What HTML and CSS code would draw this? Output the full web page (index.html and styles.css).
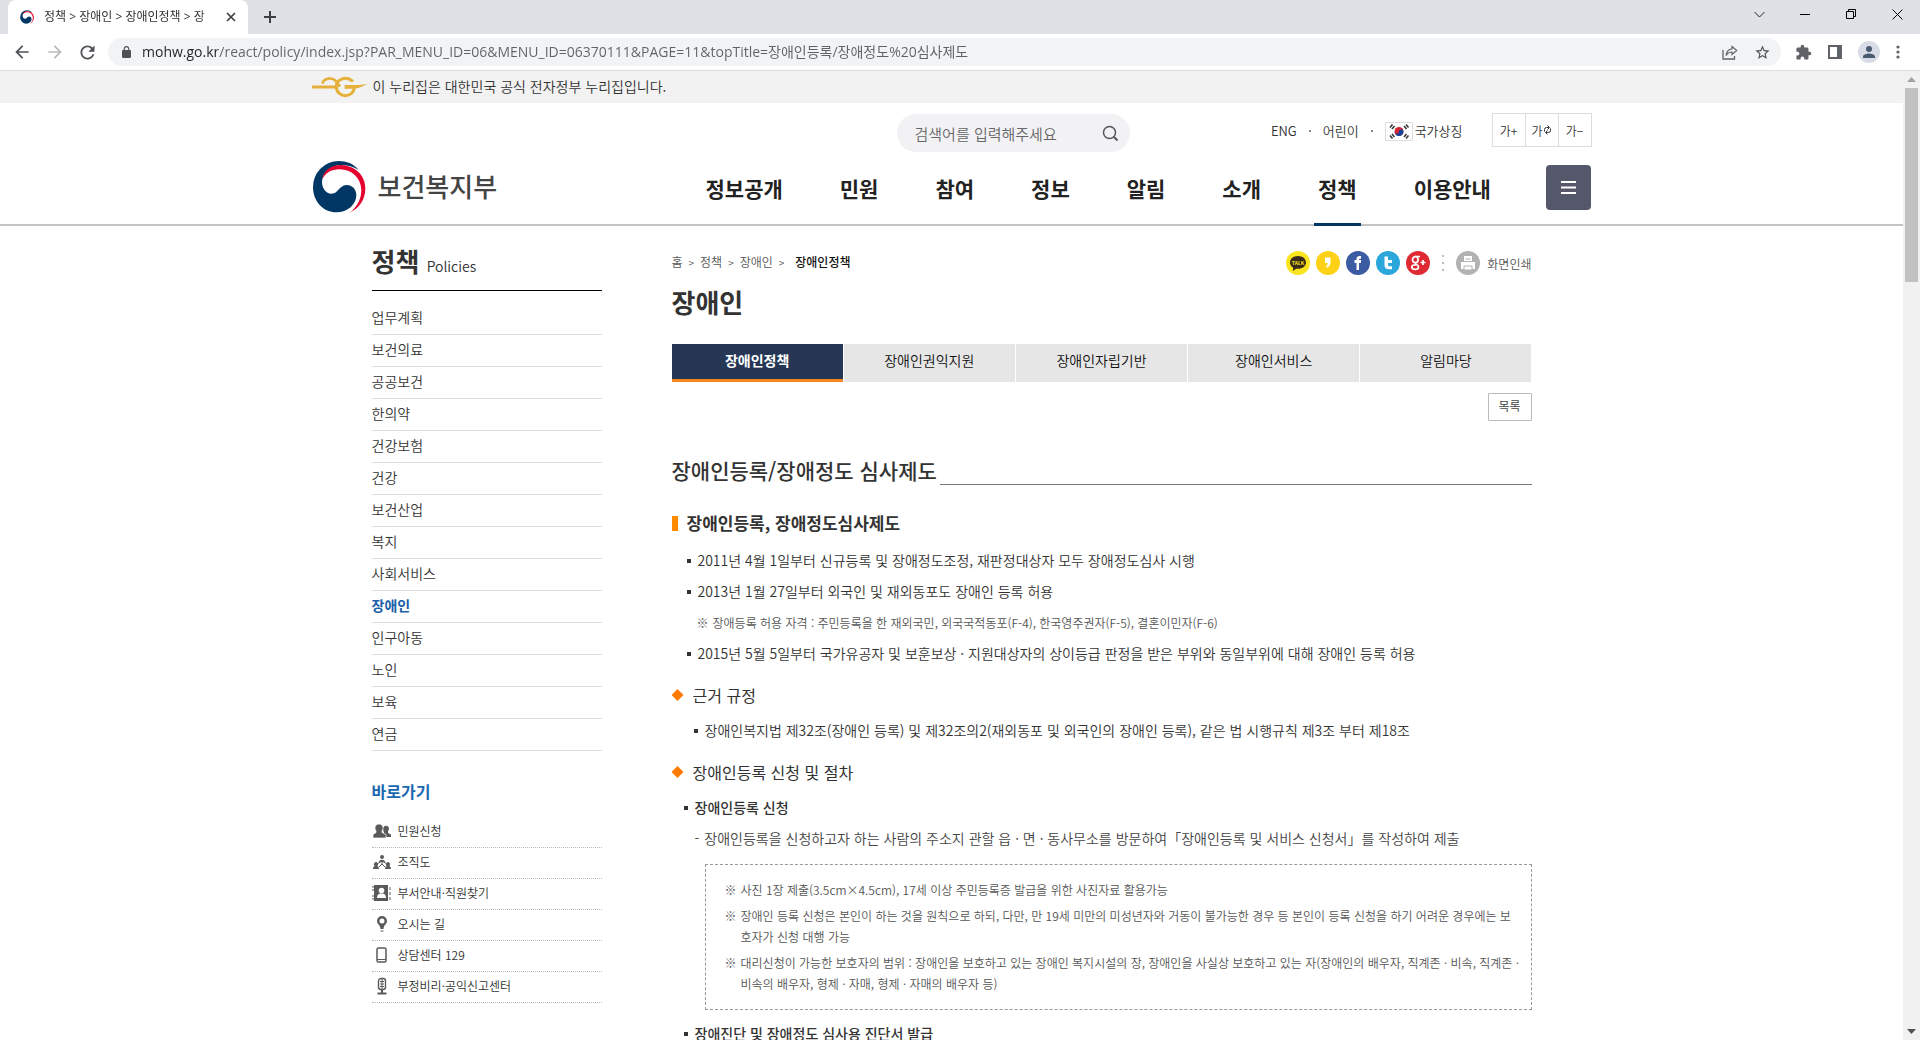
FILE: index.html
```html
<!DOCTYPE html>
<html lang="ko">
<head>
<meta charset="utf-8">
<title>정책 &gt; 장애인 &gt; 장애인정책</title>
<link rel="stylesheet" href="styles.css">
</head>
<body>
<svg class="defs" aria-hidden="true">
  <symbol id="taegeuk" viewBox="66 272 160 156">
    <path fill="#003764" d="M205 299C190 280 168 272 145 272A78 77 0 0 0 68 350C68 394 100 426 138 426C172 426 198 402 198 374C198 356 184 343 168 344C145 346 144 370 124 370C106 370 95 352 95 334C97 304 122 284 155 284C175 285 192 290 205 299Z"/>
    <path fill="#e4032e" d="M96 328C98 302 122 284 152 284C192 285 225 314 225 353C225 390 206 414 178 427C202 409 213 384 213 358C211 322 184 297 148 297C122 297 104 308 96 328Z"/>
  </symbol>
</svg>
<div class="browser">
  <div class="tabstrip">
    <div class="tab">
      <svg class="favicon"><use href="#taegeuk"/></svg>
      <span class="tab-title">정책 &gt; 장애인 &gt; 장애인정책 &gt; 장</span>
      <button class="plain" aria-label="탭 닫기"><svg width="10" height="10" viewBox="0 0 10 10"><path d="M1 1l8 8M9 1l-8 8" stroke="#3c4043" stroke-width="1.7"/></svg></button>
    </div>
    <button class="plain new-tab" aria-label="새 탭"><svg width="12" height="12" viewBox="0 0 12 12"><path d="M6 0v12M0 6h12" stroke="#3c4043" stroke-width="2"/></svg></button>
    <div class="window-buttons">
      <button class="plain" aria-label="탭 검색"><svg width="11" height="7" viewBox="0 0 11 7"><path d="M.5 1l5 5 5-5" fill="none" stroke="#222"/></svg></button>
      <button class="plain" aria-label="최소화"><svg width="10" height="10" viewBox="0 0 10 10"><path d="M0 5.5h10" stroke="#000"/></svg></button>
      <button class="plain" aria-label="이전 크기로"><svg width="10" height="10" viewBox="0 0 10 10"><path d="M.5 2.5h7v7h-7zM2.5 2.500V.5h7v7h-2" fill="none" stroke="#000"/></svg></button>
      <button class="plain" aria-label="닫기"><svg width="11" height="11" viewBox="0 0 11 11"><path d="M.5.5l10 10M10.500.5l-10 10" stroke="#000"/></svg></button>
    </div>
  </div>
  <div class="toolbar">
    <button class="plain nav-button" aria-label="뒤로"><svg width="20" height="20" viewBox="0 0 24 24"><path fill="#4d5156" d="M20 11H7.830l5.590-5.590L12 4l-8 8 8 8 1.410-1.410L7.830 13H20z"/></svg></button>
    <button class="plain nav-button" aria-label="앞으로"><svg width="20" height="20" viewBox="0 0 24 24"><path fill="#bababa" d="M12 4l-1.410 1.410L16.170 11H4v2h12.170l-5.580 5.590L12 20l8-8z"/></svg></button>
    <button class="plain nav-button" aria-label="새로고침"><svg width="21" height="21" viewBox="0 0 24 24"><path fill="#4d5156" d="M17.65 6.35C16.2 4.9 14.21 4 12 4c-4.42 0-7.99 3.58-7.99 8s3.57 8 7.99 8c3.73 0 6.84-2.55 7.73-6h-2.08c-.82 2.330-3.040 4-5.650 4-3.310 0-6-2.690-6-6s2.690-6 6-6c1.660 0 3.140.690 4.220 1.780L13 11h7V4z"/></svg></button>
    <div class="address">
      <svg width="9" height="12" viewBox="4 1 16 21" preserveAspectRatio="none"><path fill="#4d5156" d="M18 8h-1V6c0-2.760-2.240-5-5-5S7 3.240 7 6v2H6c-1.100 0-2 .9-2 2v10c0 1.100.9 2 2 2h12c1.100 0 2-.9 2-2V10c0-1.100-.9-2-2-2zM9 6c0-1.660 1.340-3 3-3s3 1.340 3 3v2H9z"/></svg>
      <input class="url" type="text" aria-label="주소" value="mohw.go.kr/react/policy/index.jsp?PAR_MENU_ID=06&amp;MENU_ID=06370111&amp;PAGE=11&amp;topTitle=장애인등록/장애정도%20심사제도">
      <button class="plain" aria-label="공유"><svg width="16" height="15" viewBox="0 0 16 15"><path d="M1 5v9h11.500v-3" fill="none" stroke="#5f6368" stroke-width="1.300"/><path d="M10 1.500L14.700 5.500 10 9.500V7C7 7 5.500 8.300 4.200 10.500 4.500 6.500 6.500 4.200 10 3.800z" fill="none" stroke="#5f6368" stroke-width="1.200"/></svg></button>
      <button class="plain" aria-label="북마크"><svg width="17" height="17" viewBox="0 0 24 24"><path fill="#4d5156" d="M22 9.240l-7.190-.62L12 2 9.190 8.630 2 9.240l5.460 4.730L5.820 21 12 17.270 18.180 21l-1.630-7.030zM12 15.400l-3.760 2.270 1-4.280-3.320-2.880 4.380-.38L12 6.100l1.710 4.040 4.380.38-3.320 2.880 1 4.280z"/></svg></button>
    </div>
    <div class="tools">
      <button class="plain" aria-label="확장 프로그램"><svg width="17" height="17" viewBox="0 0 24 24"><path fill="#5f6368" d="M20.500 11H19V7c0-1.100-.9-2-2-2h-4V3.500a2.500 2.500 0 0 0-5 0V5H4c-1.100 0-2 .9-2 2v3.800h1.500a2.700 2.700 0 0 1 0 5.400H2V20c0 1.100.9 2 2 2h3.800v-1.500a2.700 2.700 0 0 1 5.400 0V22H17c1.100 0 2-.9 2-2v-4h1.500a2.500 2.500 0 0 0 0-5z"/></svg></button>
      <button class="plain" aria-label="사이드 패널"><svg width="14" height="14" viewBox="0 0 14 14"><path fill="#5f6368" fill-rule="evenodd" d="M0 0h14v14H0zM2 2v10h7V2z"/></svg></button>
      <button class="plain avatar" aria-label="프로필"><svg width="18" height="18" viewBox="0 0 24 24"><path fill="#4a5a70" d="M12 12a4 4 0 1 0 0-8 4 4 0 0 0 0 8zm0 2c-2.670 0-8 1.340-8 4v2h16v-2c0-2.660-5.330-4-8-4z"/></svg></button>
      <button class="plain" aria-label="메뉴"><svg width="4" height="14" viewBox="0 0 4 14" fill="#5f6368"><circle cx="2" cy="2" r="1.600"/><circle cx="2" cy="7" r="1.600"/><circle cx="2" cy="12" r="1.600"/></svg></button>
    </div>
  </div>

  <div class="viewport">
    <div class="page">
      <div class="gov-bar">
        <div class="wide gov-inner">
          <svg width="56" height="22" viewBox="66 20 168 66" fill="none" stroke="#e5b13a"><path d="M66 53H138" stroke-width="9"/><path d="M97 43C102 26 126 22 138 36L150 52" stroke-width="8"/><path d="M189 36C166 18 138 30 139 54C142 88 193 88 193 51" stroke-width="9"/><path fill="#e5b13a" stroke="none" d="M164 47H208L232 44L208 55L190 58H164z"/></svg>
          <span>이 누리집은 대한민국 공식 전자정부 누리집입니다.</span>
        </div>
      </div>
      <header class="header">
        <div class="wide header-inner">
          <a class="logo" href="#"><svg width="54" height="52"><use href="#taegeuk"/></svg><span>보건복지부</span></a>
          <div class="header-right">
            <div class="header-top">
              <form class="search">
                <input type="search" aria-label="검색어" placeholder="검색어를 입력해주세요">
                <button class="plain" type="button" aria-label="검색"><svg width="17" height="17" viewBox="0 0 17 17" fill="none" stroke="#555" stroke-width="1.500"><circle cx="7.500" cy="7.500" r="6"/><path d="M12 12l3.500 3.500" stroke-width="2"/></svg></button>
              </form>
              <div class="utils">
                <ul class="util-links">
                  <li><a href="#">ENG</a></li>
                  <li><a href="#">어린이</a></li>
                  <li><a class="flag-link" href="#"><svg width="28" height="19" viewBox="0 0 28 19"><path d="M.5.5h27v18H.5z" fill="#fff" stroke="#ddd"/><circle cx="14" cy="9.500" r="4.500" fill="#d9232e"/><path d="M9.500 9.500a2.250 2.250 0 0 0 4.500 0 2.250 2.250 0 0 1 4.500 0 4.500 4.500 0 0 1-9 0z" fill="#14429a"/><path d="M5 5.500L7.500 2.500M7 7L9.500 4M21 2.500l2.500 3M19 4l2.500 3M5 13.500l2.500 3M7 12l2.500 3M21 16.500l2.500-3M19 15l2.500-3" stroke="#333" stroke-width="1.500"/></svg>국가상징</a></li>
                </ul>
                <div class="text-size">
                  <button aria-label="글자 크게">가+</button>
                  <button aria-label="글자 크기 초기화">가<svg width="9" height="10" viewBox="0 0 9 10" fill="none" stroke="#333"><path d="M1.500 6.500V4.500Q1.500 2.500 3.500 2.500H6M4.500.5l2 2-2 2M7.500 3.500v2Q7.500 7.500 5.500 7.500H3M4.500 5.500l-2 2 2 2"/></svg></button>
                  <button aria-label="글자 작게">가−</button>
                </div>
              </div>
            </div>
            <nav class="gnb">
              <a href="#">정보공개</a><a href="#">민원</a><a href="#">참여</a><a href="#">정보</a><a href="#">알림</a><a href="#">소개</a><a class="on" href="#">정책</a><a href="#">이용안내</a>
              <button class="all-menu" aria-label="전체 메뉴"><svg width="15" height="13" viewBox="0 0 15 13"><path d="M0 1h15M0 6.500h15M0 12h15" stroke="#fff" stroke-width="2"/></svg></button>
            </nav>
          </div>
        </div>
      </header>

      <div class="body">
        <aside class="side">
          <h2 class="side-title">정책 <small>Policies</small></h2>
          <ul class="side-menu">
            <li><a href="#">업무계획</a></li><li><a href="#">보건의료</a></li><li><a href="#">공공보건</a></li><li><a href="#">한의약</a></li><li><a href="#">건강보험</a></li><li><a href="#">건강</a></li><li><a href="#">보건산업</a></li><li><a href="#">복지</a></li><li><a href="#">사회서비스</a></li><li><a class="on" href="#">장애인</a></li><li><a href="#">인구아동</a></li><li><a href="#">노인</a></li><li><a href="#">보육</a></li><li><a href="#">연금</a></li>
          </ul>
          <h3 class="quick-title">바로가기</h3>
          <ul class="quick">
            <li><a href="#"><svg width="20" height="18" viewBox="0 0 20 18" fill="#5a5a5a"><path d="M11 7a3 3 0 1 1 5 2v2l3 1.500V15h-6z"/><path stroke="#fff" stroke-width=".7" d="M4 9C2 6 3 2 7 2s5 4 3 7v1.500l4 2V16H1v-3.500l3-2z"/></svg>민원신청</a></li>
            <li><a href="#"><svg width="20" height="18" viewBox="0 0 20 18" fill="#5a5a5a"><circle cx="10" cy="4" r="2"/><path d="M7 9c0-3 6-3 6 0zM1 16c0-2 1-3 2-3a2 2 0 1 1 2 0c1 0 2 1 2 3zM13 16c0-2 1-3 2-3a2 2 0 1 1 2 0c1 0 2 1 2 3z"/><path d="M10 8v4M5 11l5-3 5 3M10 11l-3 3M10 11l3 3" stroke="#5a5a5a" fill="none"/></svg>조직도</a></li>
            <li><a href="#"><svg width="20" height="18" viewBox="0 0 20 18"><path d="M2 1h14v16H2z" fill="#5a5a5a"/><path d="M0 3h4M0 6h4M0 12h4M0 15h4" stroke="#5a5a5a"/><path d="M18 3v3M18 8v3M18 13v3" stroke="#5a5a5a"/><circle cx="9.500" cy="6.500" r="2.800" fill="#fff"/><path d="M5 14c0-3 1.500-4 3-4.500h3c1.500.5 3 1.500 3 4.500z" fill="#fff"/></svg>부서안내·직원찾기</a></li>
            <li><a href="#"><svg width="20" height="18" viewBox="0 0 20 18"><path fill="#5a5a5a" fill-rule="evenodd" d="M10 1a5 5 0 0 1 5 5c0 3-3.500 4-3.500 8h-3C8.500 10 5 9 5 6a5 5 0 0 1 5-5zm0 2.500a2.500 2.500 0 1 0 0 5 2.500 2.500 0 0 0 0-5z"/><path d="M8.500 16h3" stroke="#5a5a5a"/></svg>오시는 길</a></li>
            <li><a href="#"><svg width="20" height="18" viewBox="0 0 20 18"><rect x="5" y="2" width="9" height="14" rx="1.500" fill="none" stroke="#5a5a5a" stroke-width="1.500"/><path d="M5 13.500h9" stroke="#5a5a5a"/></svg>상담센터 129</a></li>
            <li><a href="#"><svg width="20" height="18" viewBox="0 0 20 18" fill="none" stroke="#5a5a5a"><rect x="6.500" y="1.500" width="7" height="11" rx="2.500" stroke-width="1.400"/><path d="M10 2v10M8 4.500h4M8 7h4M8 9.500h4"/><path d="M10 12v4M5.500 16.500h9" stroke-width="2"/></svg>부정비리·공익신고센터</a></li>
          </ul>
        </aside>

        <main class="content">
          <div class="topline">
            <nav class="crumbs"><a href="#">홈</a><i>&gt;</i><a href="#">정책</a><i>&gt;</i><a href="#">장애인</a><i>&gt;</i><strong>장애인정책</strong></nav>
            <div class="share">
              <a href="#" aria-label="카카오톡"><svg width="24" height="24" viewBox="0 0 24 24"><circle cx="12" cy="12" r="12" fill="#f9e51e"/><path d="M12 5c-4.600 0-8 2.800-8 6.500 0 2.300 1.300 4.200 3.200 5.300L6.800 20l3.400-2.200c6 .6 9.800-2.500 9.800-6.300C20 7.800 16.600 5 12 5z" fill="#3a2a1a"/><text x="12" y="13.500" class="talk">TALK</text></svg></a>
              <a href="#" aria-label="카카오스토리"><svg width="24" height="24" viewBox="0 0 24 24"><circle cx="12" cy="12" r="12" fill="#fcd116"/><path d="M9 6.500h5.500V11c0 3-1.200 4.500-3.500 5.800L9.800 15.300C11.200 14.500 11.800 13.500 11.900 12H9z" fill="#fff"/></svg></a>
              <a href="#" aria-label="페이스북"><svg width="24" height="24" viewBox="0 0 24 24"><circle cx="12" cy="12" r="12" fill="#3b5ba3"/><path d="M10.500 19v-7H8.500V9h2V7.800C10.500 5.800 11.800 5 13.500 5H15v2.800h-1c-.7 0-1 .2-1 .8V9h2.200l-.4 3H13v7z" fill="#fff"/></svg></a>
              <a href="#" aria-label="트위터"><svg width="24" height="24" viewBox="0 0 24 24"><circle cx="12" cy="12" r="12" fill="#2ba7dc"/><path d="M8.500 5.500H12V9h4v3h-4v1.500c0 1.200.5 1.700 1.500 1.700H16v3h-3c-3 0-4.500-1.500-4.500-4z" fill="#fff"/></svg></a>
              <a href="#" aria-label="구글 플러스"><svg width="24" height="24" viewBox="0 0 24 24"><circle cx="12" cy="12" r="12" fill="#df2a33"/><g fill="none" stroke="#fff" stroke-width="1.700"><ellipse cx="9.300" cy="8.700" rx="2.800" ry="3"/><path d="M9 5.500h5M10 11.700c-2 1.300 2.500 1.800 2.500 4.300 0 3.200-6.700 3.200-6.700 0 0-1.600 2-2.200 4-2.200M14.500 11.500h5M17 9v5"/></g></svg></a>
              <span class="dots" aria-hidden="true"></span>
              <button class="print plain"><svg width="24" height="24" viewBox="0 0 24 24"><circle cx="12" cy="12" r="12" fill="#b2b2b2"/><path d="M8 5h8v5H8zM5 11h14v7H5z" fill="#fff"/><path d="M8 15h8v4H8z" fill="#fff" stroke="#b2b2b2"/><path d="M9.500 8h5" stroke="#b2b2b2"/></svg>화면인쇄</button>
            </div>
          </div>
          <h1>장애인</h1>
          <nav class="tabs"><a class="on" href="#">장애인정책</a><a href="#">장애인권익지원</a><a href="#">장애인자립기반</a><a href="#">장애인서비스</a><a href="#">알림마당</a></nav>
          <div class="actions"><button>목록</button></div>

          <h2 class="doc-title">장애인등록/장애정도 심사제도</h2>
          <h3 class="bar-title">장애인등록, 장애정도심사제도</h3>
          <ul class="list first">
            <li>2011년 4월 1일부터 신규등록 및 장애정도조정, 재판정대상자 모두 장애정도심사 시행</li>
            <li>2013년 1월 27일부터 외국인 및 재외동포도 장애인 등록 허용</li>
            <li class="remark"><span>※</span>장애등록 허용 자격 : 주민등록을 한 재외국민, 외국국적동포(F-4), 한국영주권자(F-5), 결혼이민자(F-6)</li>
            <li>2015년 5월 5일부터 국가유공자 및 보훈보상 · 지원대상자의 상이등급 판정을 받은 부위와 동일부위에 대해 장애인 등록 허용</li>
          </ul>
          <h4 class="diamond">근거 규정</h4>
          <ul class="list inner">
            <li>장애인복지법 제32조(장애인 등록) 및 제32조의2(재외동포 및 외국인의 장애인 등록), 같은 법 시행규칙 제3조 부터 제18조</li>
          </ul>
          <h4 class="diamond">장애인등록 신청 및 절차</h4>
          <h5 class="sub">장애인등록 신청</h5>
          <p class="dash"><span>-</span>장애인등록을 신청하고자 하는 사람의 주소지 관할 읍 · 면 · 동사무소를 방문하여「장애인등록 및 서비스 신청서」를 작성하여 제출</p>
          <ul class="notes">
            <li><span>※</span><p>사진 1장 제출(3.5cm×4.5cm), 17세 이상 주민등록증 발급을 위한 사진자료 활용가능</p></li>
            <li><span>※</span><p>장애인 등록 신청은 본인이 하는 것을 원칙으로 하되, 다만, 만 19세 미만의 미성년자와 거동이 불가능한 경우 등 본인이 등록 신청을 하기 어려운 경우에는 보<br>호자가 신청 대행 가능</p></li>
            <li><span>※</span><p>대리신청이 가능한 보호자의 범위 : 장애인을 보호하고 있는 장애인 복지시설의 장, 장애인을 사실상 보호하고 있는 자(장애인의 배우자, 직계존 · 비속, 직계존 ·<br>비속의 배우자, 형제 · 자매, 형제 · 자매의 배우자 등)</p></li>
          </ul>
          <h5 class="sub">장애진단 및 장애정도 심사용 진단서 발급</h5>
        </main>
      </div>
    </div>
    <div class="scrollbar" aria-hidden="true">
      <svg width="9" height="5" viewBox="0 0 9 5"><path d="M0 5l4.500-5L9 5z" fill="#a3a3a3"/></svg>
      <div class="thumb"></div>
      <svg width="9" height="5" viewBox="0 0 9 5"><path d="M0 0l4.500 5L9 0z" fill="#505050"/></svg>
    </div>
  </div>
</div>
</body>
</html>
```
FILE: styles.css
```css
* { box-sizing: border-box; }
body, h1, h2, h3, h4, h5, p, ul { margin: 0; padding: 0; }
body { font-family: "Noto Sans CJK KR", sans-serif; font-size: 14px; font-weight: 350; color: #333; background: #fff; }
ul { list-style: none; }
a { color: inherit; text-decoration: none; }
svg { display: block; flex: none; }
button, input { font-family: inherit; font-weight: inherit; }
.defs { position: absolute; width: 0; height: 0; }
.plain { display: flex; align-items: center; justify-content: center; padding: 0; border: 0; background: none; color: inherit; }

/* browser frame */
.browser { display: flex; flex-direction: column; height: 100vh; overflow: hidden; }
.tabstrip { flex: none; display: flex; height: 34px; padding-left: 8px; background: #dee1e6; }
.tab { display: flex; align-items: center; gap: 10px; width: 240px; padding: 0 12px; border-radius: 8px 8px 0 0; background: #fff; }
.favicon { width: 14px; height: 14px; }
.tab-title { flex: 1; overflow: hidden; font: 12px/20px "Open Sans", "Noto Sans CJK KR", sans-serif; white-space: nowrap; mask-image: linear-gradient(90deg, #000 156px, transparent 176px); }
.new-tab { width: 44px; }
.window-buttons { display: flex; margin-left: auto; }
.window-buttons .plain { width: 46px; height: 28px; }
.toolbar { flex: none; display: flex; align-items: center; height: 37px; padding: 0 20px 0 5px; border-bottom: 1px solid #dadce0; }
.nav-button { width: 33px; height: 28px; }
.address { flex: 1; display: flex; align-items: center; gap: 16px; height: 28px; margin-left: 4px; padding: 0 10px 0 14px; border-radius: 14px; background: #f1f3f4; }
.url { flex: 1; min-width: 0; margin-left: -5px; padding: 0; border: 0; outline: 0; font: 14px/20px "Open Sans", "Noto Sans CJK KR", sans-serif; color: transparent; background: linear-gradient(90deg, #202124 75px, #5f6368 75px); background-clip: text; -webkit-background-clip: text; }
.tools { display: flex; align-items: center; gap: 16px; padding-left: 14px; }
.avatar { width: 22px; height: 22px; border-radius: 50%; background: #d7dce6; }
.viewport { flex: 1; min-height: 0; display: flex; }
.page { flex: 1; min-width: 0; overflow: hidden; }
.scrollbar { flex: none; display: flex; flex-direction: column; align-items: center; width: 17px; padding: 6px 0; background: #f1f1f1; }
.thumb { width: 13px; height: 194px; margin: 6px 0 auto; background: #c1c1c1; }

/* site header */
.wide { max-width: 1280px; margin: 0 auto; }
.gov-bar { background: #f2f2f2; }
.gov-inner { display: flex; align-items: center; gap: 5px; height: 32px; }
.gov-inner span { padding-bottom: 2px; }
.header { border-bottom: 2px solid #c4c4c4; }
.header-inner { display: flex; justify-content: space-between; padding-top: 10px; }
.logo { display: flex; align-items: center; gap: 12px; height: 52px; margin-top: 48px; font-size: 26px; font-weight: 500; color: #444; }
.logo span { padding-bottom: 4px; }
.header-right { width: 886px; }
.header-top { display: flex; justify-content: space-between; align-items: flex-start; height: 42px; padding-left: 191px; }
.search { display: flex; align-items: center; width: 233px; height: 38px; margin-top: 1px; padding: 0 11px 0 18px; border-radius: 19px; background: #f2f2f5; }
.search input { flex: 1; min-width: 0; padding: 0; border: 0; outline: 0; background: none; font-size: 15px; }
.search input::placeholder { color: #666; }
.utils { display: flex; gap: 29px; }
.util-links { display: flex; gap: 12px; font-size: 13px; line-height: 36px; }
.util-links li { display: flex; align-items: center; gap: 12px; }
.util-links li + li::before { content: ""; width: 2px; height: 2px; background: #888; }
.flag-link { display: flex; align-items: center; gap: 2px; }
.text-size { display: flex; width: 100px; height: 34px; border: 1px solid #ddd; }
.text-size button { flex: 1; display: flex; align-items: center; justify-content: center; padding: 0; border: 0; background: #fff; font-size: 12px; color: #333; }
.text-size button + button { border-left: 1px solid #ddd; }
.gnb { display: flex; gap: 57px; height: 59px; margin-top: 10px; }
.gnb a { position: relative; flex: none; font-size: 21px; line-height: 46px; font-weight: 700; color: #222; }
.gnb .on::after { content: ""; position: absolute; left: -4px; right: -4px; bottom: -2px; height: 3px; background: #003764; }
.all-menu { flex: none; display: flex; align-items: center; justify-content: center; width: 45px; height: 45px; margin-left: -2px; padding: 0; border: 0; border-radius: 4px; background: #55576b; }

/* columns */
.body { display: flex; gap: 70px; max-width: 1160px; margin: 0 auto; }
.side { flex: none; width: 230px; }
.side-title { height: 65px; padding-top: 16px; border-bottom: 1px solid #000; font-size: 26px; line-height: 38px; }
.side-title small { font-size: 14px; font-weight: 350; }
.side-menu { padding-top: 12px; }
.side-menu li { height: 32px; border-bottom: 1px solid #ddd; line-height: 28px; }
.side-menu .on { font-weight: 700; color: #1b5fa8; }
.quick-title { margin: 28px 0 14px; font-size: 16px; line-height: 24px; color: #1b67b0; }
.quick a { display: flex; align-items: center; gap: 6px; height: 31px; padding-bottom: 3px; border-bottom: 1px dotted #bbb; font-size: 12px; }
.content { flex: 1; min-width: 0; }
.topline { display: flex; justify-content: space-between; align-items: center; height: 26px; margin-top: 24px; font-size: 12px; color: #555; }
.crumbs { display: flex; gap: 6px; }
.crumbs i { font-style: normal; font-size: 10px; line-height: 20px; }
.crumbs strong { margin-left: 5px; font-weight: 500; color: #111; }
.share { display: flex; align-items: center; gap: 6px; }
.talk { font: 700 5px "Noto Sans CJK KR", sans-serif; fill: #f9e51e; text-anchor: middle; }
.dots { width: 2px; height: 16px; margin: 0 6px; background: repeating-linear-gradient(#bbb 0 2px, transparent 2px 7px); }
.print { gap: 7px; font-size: 12px; }
h1 { margin-top: 6px; font-size: 26px; line-height: 40px; }
.tabs { display: grid; grid-template-columns: repeat(5, 1fr); gap: 1px; margin-top: 22px; }
.tabs a { height: 38px; background: #e6e6e6; line-height: 32px; text-align: center; color: #111; }
.tabs .on { border-bottom: 3px solid #f7861f; background: #253755; font-weight: 700; color: #fff; }
.actions { display: flex; justify-content: flex-end; margin-top: 11px; }
.actions button { width: 44px; height: 28px; padding: 0 0 3px; border: 1px solid #bbb; border-radius: 1px; background: #fff; font-size: 12px; font-weight: 400; color: #444; }

/* document text */
.doc-title { display: flex; align-items: flex-end; gap: 3px; margin-top: 34px; font-size: 21px; line-height: 30px; font-weight: 500; }
.doc-title::after { content: ""; flex: 1; height: 1px; background: #777; }
.bar-title { display: flex; align-items: center; gap: 9px; margin-top: 25px; font-size: 17px; line-height: 26px; font-weight: 700; }
.bar-title::before { content: ""; width: 6px; height: 15px; background: #ff8a00; }
.list { line-height: 31px; }
.list li, .sub { display: flex; align-items: center; gap: 7px; }
.list li:not(.remark)::before, .sub::before { content: ""; flex: none; width: 4px; height: 4px; background: #333; }
.first { margin-top: 9px; padding-left: 15px; }
.inner { margin-top: 8px; padding-left: 22px; }
.list .remark { gap: 4px; padding-left: 10px; font-size: 12px; color: #555; }
.diamond { display: flex; align-items: center; gap: 9px; margin-top: 14px; font-size: 16px; line-height: 24px; font-weight: 400; }
.diamond::before { content: ""; width: 12px; height: 12px; background: #ff7a00; clip-path: polygon(50% 0, 100% 50%, 50% 100%, 0 50%); }
.sub { margin-top: 8px; padding-left: 12px; font-size: 14px; line-height: 31px; font-weight: 500; }
.dash { display: flex; gap: 5px; padding-left: 23px; line-height: 31px; color: #444; }
.notes { display: flex; flex-direction: column; gap: 5px; margin: 10px 0 0 33px; padding: 14px 4px 15px 19px; border: 1px dashed #999; font-size: 12px; line-height: 21px; color: #555; }
.notes li { display: flex; gap: 4px; }
.notes p { word-break: break-all; }
```
